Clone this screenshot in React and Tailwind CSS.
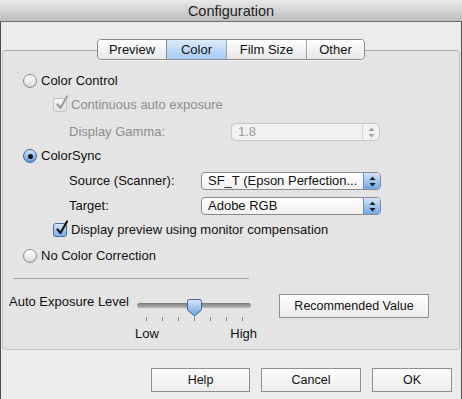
import React from "react";

function Radio({ checked }) {
  if (checked) {
    return (
      <span className="flex h-[14px] w-[14px] shrink-0 items-center justify-center rounded-full border border-[#3b679f] bg-linear-to-b from-[#d2e4f8] to-[#5e98dc]">
        <span className="h-[5px] w-[5px] rounded-full bg-[#141414]" />
      </span>
    );
  }
  return (
    <span className="h-[14px] w-[14px] shrink-0 rounded-full border border-[#8b8b8b] bg-linear-to-b from-[#ffffff] to-[#dcdcdc] shadow-[inset_0_-1px_1px_rgba(0,0,0,0.08)]" />
  );
}

function Checkbox({ disabled }) {
  const box = disabled
    ? "border-[#c2c2c2] from-[#f6f6f6] to-[#e2e2e2]"
    : "border-[#45709f] from-[#d4e5f9] to-[#78ade9]";
  return (
    <span className={`relative h-[14px] w-[14px] shrink-0 rounded-[3px] border bg-linear-to-b ${box}`}>
      <svg className="absolute -top-[4px] left-[1px]" width="14" height="16" viewBox="0 0 14 16">
        <path
          d="M2.5 9.5 L5.5 13 L12 1.5"
          fill="none"
          stroke={disabled ? "#9d9d9d" : "#151515"}
          strokeWidth="2.2"
          strokeLinecap="round"
          strokeLinejoin="round"
        />
      </svg>
    </span>
  );
}

function Popup({ className, text, disabled }) {
  return (
    <div
      className={`flex h-[18px] overflow-hidden rounded-[4px] border ${
        disabled ? "border-[#c6c6c6] bg-[#f1f1f1]" : "border-[#8a8a8a] bg-linear-to-b from-[#ffffff] to-[#f1f1f1]"
      } ${className}`}
    >
      <div
        className={`flex flex-1 items-center pl-[6px] text-[13px] leading-[16px] ${
          disabled ? "text-[#9b9b9b]" : "text-[#111]"
        }`}
      >
        {text}
      </div>
      <div
        className={`flex w-[17px] items-center justify-center border-l ${
          disabled ? "border-[#d6d6d6]" : "border-[#6d8fbd] bg-linear-to-b from-[#d5e6f9] to-[#6ea6e7]"
        }`}
      >
        <svg width="7" height="11" viewBox="0 0 7 11">
          <path d="M3.5 0.5 L6.5 4 L0.5 4 Z M0.5 7 L6.5 7 L3.5 10.5 Z" fill={disabled ? "#a4a4a4" : "#1a1a1a"} />
        </svg>
      </div>
    </div>
  );
}

function Button({ className, children }) {
  return (
    <div
      className={`flex h-[24px] items-center justify-center border border-[#8e8e8e] bg-linear-to-b from-[#fefefe] to-[#ececec] text-[12.5px] leading-[16px] text-[#111] ${className}`}
    >
      {children}
    </div>
  );
}

function Slider() {
  const ticks = [11, 27, 43, 59, 75, 91, 107];
  return (
    <svg width="122" height="30" viewBox="0 0 122 30">
      <defs>
        <linearGradient id="trk" x1="0" y1="0" x2="0" y2="1">
          <stop offset="0" stopColor="#7a7a7a" />
          <stop offset="1" stopColor="#b9b9b9" />
        </linearGradient>
        <linearGradient id="thm" x1="0" y1="0" x2="0" y2="1">
          <stop offset="0" stopColor="#d9e8fa" />
          <stop offset="1" stopColor="#6aa0e2" />
        </linearGradient>
      </defs>
      <rect x="2" y="9" width="114" height="5" rx="2.5" fill="url(#trk)" />
      {ticks.map((x) => (
        <line key={x} x1={x + 0.5} y1="23" x2={x + 0.5} y2="27" stroke="#8a8a8a" strokeWidth="1" />
      ))}
      <path
        d="M52.5 7.5 Q52.5 5.5 54.5 5.5 H64.5 Q66.5 5.5 66.5 7.5 V16 L59.5 22 L52.5 16 Z"
        fill="url(#thm)"
        stroke="#3f6598"
        strokeWidth="1"
      />
    </svg>
  );
}

export default function App() {
  return (
    <div className="flex h-[399px] w-[462px] flex-col overflow-hidden bg-[#ececec] font-['Liberation_Sans',Arial,sans-serif] text-[#111]">
      <div className="flex h-[22px] shrink-0 items-center justify-center border-b border-[#6f6f6f] bg-linear-to-b from-[#e9e9e9] to-[#bdbdbd] text-[14.5px] leading-[18px] text-[#1e1e1e]">
        Configuration
      </div>

      <div className="flex flex-1 flex-col border-l border-r border-[#4f4f4f]">
        {/* tabs */}
        <div className="relative z-10 mt-[17px] flex justify-center">
          <div className="flex h-[21px] overflow-hidden rounded-[4px] border border-[#8a8a8a] text-[13px] leading-[16px] shadow-[0_1px_0_rgba(255,255,255,0.6)]">
            <div className="flex w-[68px] items-center justify-center bg-linear-to-b from-[#ffffff] to-[#e7e7e7]">Preview</div>
            <div className="flex w-[60px] items-center justify-center border-l border-[#8a8a8a] bg-linear-to-b from-[#dcebfc] to-[#a3cbf3]">Color</div>
            <div className="flex w-[80px] items-center justify-center border-l border-[#a5a5a5] bg-linear-to-b from-[#ffffff] to-[#e7e7e7]">Film Size</div>
            <div className="flex w-[58px] items-center justify-center border-l border-[#a5a5a5] bg-linear-to-b from-[#ffffff] to-[#e7e7e7]">Other</div>
          </div>
        </div>

        {/* group box */}
        <div className="-mt-[10px] ml-[1px] w-[458px] rounded-[4px] border border-[#c3c3c3] border-t-[#a9a9a9] bg-[#e4e4e4] pt-[18px] text-[13px] leading-[16px]">
          <div className="flex h-[24px] items-center gap-[4px] pl-[20px]">
            <Radio />
            <span>Color Control</span>
          </div>
          <div className="flex h-[24px] items-center gap-[4px] pl-[50px] text-[#8d8d8d]">
            <Checkbox disabled />
            <span>Continuous auto exposure</span>
          </div>
          <div className="flex h-[30px] items-center pl-[66px]">
            <span className="w-[162px] text-[#8d8d8d]">Display Gamma:</span>
            <Popup className="w-[149px]" text="1.8" disabled />
          </div>
          <div className="flex h-[18px] items-center gap-[4px] pl-[20px]">
            <Radio checked />
            <span>ColorSync</span>
          </div>
          <div className="flex h-[32px] items-center pl-[66px]">
            <span className="w-[132px]">Source (Scanner):</span>
            <Popup className="w-[180px]" text="SF_T (Epson Perfection..." />
          </div>
          <div className="flex h-[18px] items-center pl-[66px]">
            <span className="w-[132px]">Target:</span>
            <Popup className="w-[180px]" text="Adobe RGB" />
          </div>
          <div className="flex h-[30px] items-center gap-[4px] pl-[50px]">
            <Checkbox />
            <span>Display preview using monitor compensation</span>
          </div>
          <div className="flex h-[22px] items-center gap-[4px] pl-[20px]">
            <Radio />
            <span>No Color Correction</span>
          </div>

          <div className="ml-[10px] mt-[11px] h-px w-[236px] bg-[#a3a3a3]" />

          <div className="flex h-[70px] items-start pl-[6px] pt-[15px]">
            <span className="w-[126px]">Auto Exposure Level</span>
            <div className="flex w-[122px] flex-col">
              <Slider />
              <div className="mt-[2px] flex justify-between">
                <span>Low</span>
                <span>High</span>
              </div>
            </div>
            <Button className="ml-[22px] w-[150px]">Recommended Value</Button>
          </div>
        </div>

        {/* dialog buttons */}
        <div className="mt-[18px] flex justify-end gap-[11px] pr-[9px]">
          <Button className="w-[99px]">Help</Button>
          <Button className="w-[100px]">Cancel</Button>
          <Button className="w-[80px]">OK</Button>
        </div>
      </div>
    </div>
  );
}
